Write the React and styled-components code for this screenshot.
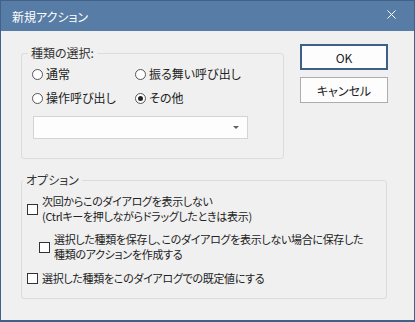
import styled, { createGlobalStyle } from "styled-components";

const GlobalStyle = createGlobalStyle`
  html, body {
    margin: 0;
    padding: 0;
    background: #f0f0f0;
  }
  body {
    font-family: "Noto Sans CJK JP", "Noto Sans", sans-serif;
    font-size: 12px;
    color: #222222;
    font-feature-settings: "palt";
  }
`;

export default function App() {
  return (
    <Window>
      <GlobalStyle />
      <TitleBar>
        <Title>新規アクション</Title>
        <CloseIcon viewBox="0 0 10 10">
          <path d="M0.5 0.5 L9.5 9.5 M9.5 0.5 L0.5 9.5" stroke="#ffffff" strokeWidth="1.1" />
        </CloseIcon>
      </TitleBar>

      <Body>
        <TopRow>
          <KindGroup>
            <Legend>種類の選択:</Legend>
            <RadioGrid>
              <Radio label="通常" />
              <Radio label="振る舞い呼び出し" />
              <Radio label="操作呼び出し" />
              <Radio label="その他" checked />
            </RadioGrid>
            <Combo>
              <ComboArrow />
            </Combo>
          </KindGroup>

          <Buttons>
            <Button $primary>OK</Button>
            <Button>キャンセル</Button>
          </Buttons>
        </TopRow>

        <OptionGroup>
          <Legend>オプション</Legend>
          <CheckRow>
            <Box />
            <CheckText>
              次回からこのダイアログを表示しない
              <br />
              (Ctrlキーを押しながらドラッグしたときは表示)
            </CheckText>
          </CheckRow>
          <CheckRow $indent $gap="9px">
            <Box />
            <CheckText>
              選択した種類を保存し、このダイアログを表示しない場合に保存した
              <br />
              種類のアクションを作成する
            </CheckText>
          </CheckRow>
          <CheckRow $gap="0">
            <Box />
            <CheckText>選択した種類をこのダイアログでの既定値にする</CheckText>
          </CheckRow>
        </OptionGroup>
      </Body>
    </Window>
  );
}

function Radio({ label, checked }) {
  return (
    <RadioLabel>
      <RadioCircle>{checked && <RadioDot />}</RadioCircle>
      {label}
    </RadioLabel>
  );
}

const Window = styled.div`
  width: 415px;
  height: 322px;
  box-sizing: border-box;
  border: 1px solid #41618a;
  border-bottom-width: 2px;
  background: #f0f0f0;
  display: flex;
  flex-direction: column;
`;

const TitleBar = styled.div`
  height: 30px;
  background: #577ca5;
  display: flex;
  align-items: center;
  justify-content: space-between;
  padding: 0 18px 4px 11px;
  box-sizing: border-box;
`;

const Title = styled.div`
  color: #ffffff;
  font-size: 12px;
  padding-top: 4px;
`;

const CloseIcon = styled.svg`
  width: 9px;
  height: 9px;
`;

const Body = styled.div`
  padding: 0 0 0 20px;
`;

const TopRow = styled.div`
  display: flex;
  align-items: flex-start;
  gap: 16px;
`;

const Group = styled.fieldset`
  margin: 0;
  min-width: 0;
  border: 1px solid #dcdcdc;
  border-radius: 3px;
  box-sizing: border-box;
`;

const KindGroup = styled(Group)`
  width: 263px;
  height: 113px;
  margin-top: 15px;
  padding: 6px 10px 0 10px;
`;

const OptionGroup = styled(Group)`
  width: 366px;
  height: 126px;
  margin-top: 14px;
  padding: 7px 10px 0 5px;
`;

const Legend = styled.legend`
  padding: 0 3px;
  margin-left: -4px;
  line-height: 14px;
  color: #333333;
`;

const RadioGrid = styled.div`
  display: grid;
  grid-template-columns: 103px 1fr;
  row-gap: 8px;
`;

const RadioLabel = styled.label`
  display: flex;
  align-items: center;
  gap: 3px;
  height: 16px;
  line-height: 16px;
`;

const RadioCircle = styled.span`
  width: 11px;
  height: 11px;
  box-sizing: border-box;
  border: 1px solid #555555;
  border-radius: 50%;
  background: #ffffff;
  display: flex;
  align-items: center;
  justify-content: center;
`;

const RadioDot = styled.span`
  width: 5px;
  height: 5px;
  border-radius: 50%;
  background: #222222;
`;

const Combo = styled.div`
  margin: 10px 0 0 1px;
  width: 215px;
  height: 23px;
  box-sizing: border-box;
  border: 1px solid #d4d4d4;
  background: #fdfdfd;
  display: flex;
  align-items: center;
  justify-content: flex-end;
  padding-right: 8px;
`;

const ComboArrow = styled.span`
  width: 0;
  height: 0;
  border-left: 3px solid transparent;
  border-right: 3px solid transparent;
  border-top: 3px solid #606060;
`;

const Buttons = styled.div`
  display: flex;
  flex-direction: column;
  gap: 7px;
  margin-top: 13px;
`;

const Button = styled.button`
  width: 88px;
  height: 26px;
  box-sizing: border-box;
  background: #fdfdfd;
  border: ${(props) => (props.$primary ? "2px solid #3e5f86" : "1px solid #adadad")};
  font-family: inherit;
  font-size: 12px;
  font-feature-settings: "palt";
  color: #222222;
  padding: 0;
`;

const CheckRow = styled.div`
  display: flex;
  align-items: center;
  gap: 4px;
  margin-left: ${(props) => (props.$indent ? "12px" : "0")};
  margin-bottom: ${(props) => props.$gap || "8px"};
`;

const Box = styled.span`
  width: 11px;
  height: 11px;
  flex: none;
  box-sizing: border-box;
  border: 1px solid #333333;
  background: #ffffff;
`;

const CheckText = styled.div`
  font-size: 11px;
  letter-spacing: -0.3px;
  line-height: 15px;
  white-space: nowrap;
`;
